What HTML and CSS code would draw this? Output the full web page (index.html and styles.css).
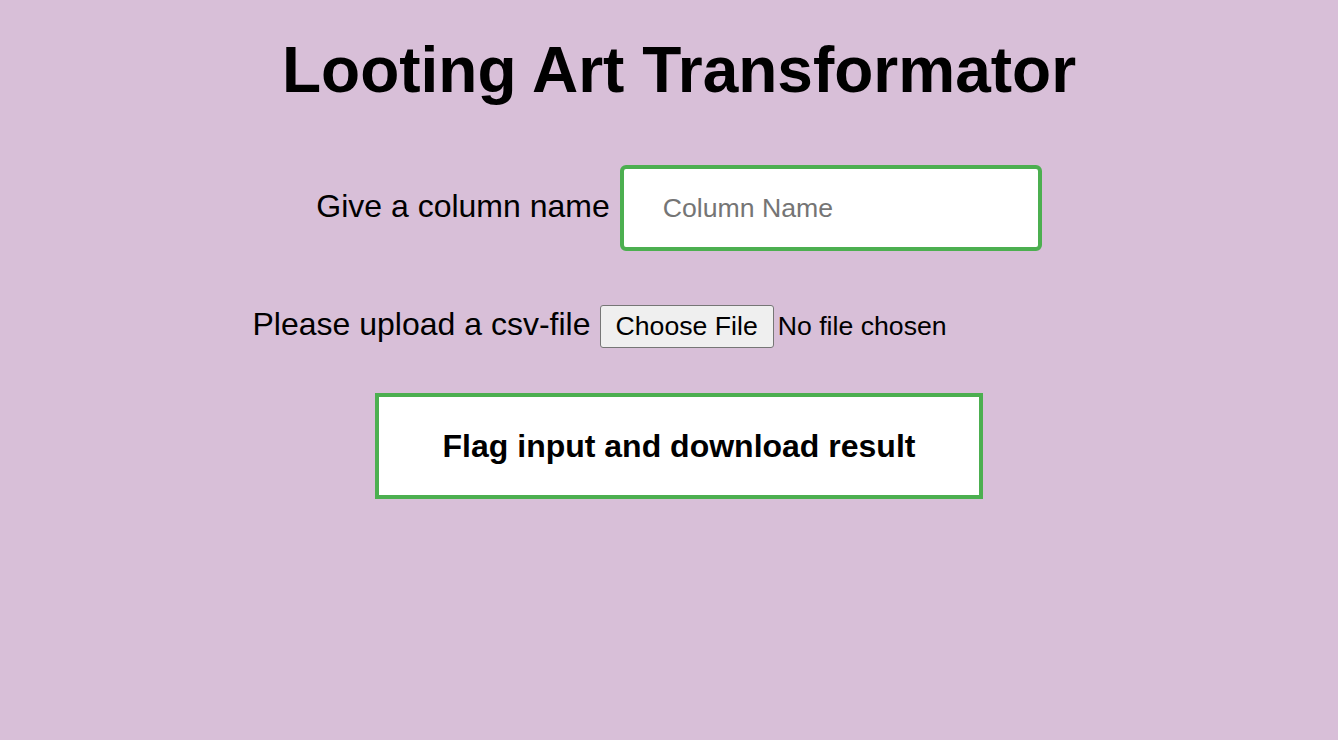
FILE: index.html
```html
<!DOCTYPE html>
<html lang="en">
<head>
<meta charset="utf-8">
<title>Looting Art Transformator</title>
<link rel="stylesheet" href="styles.css">
</head>
<body>
<main class="page">
  <h1 class="title">Looting Art Transformator</h1>
  <form class="form">
    <div class="row row-name">
      <label class="label" for="col">Give a column name</label>
      <input class="text-input" id="col" type="text" placeholder="Column Name">
    </div>
    <div class="row row-file">
      <label class="label" for="file">Please upload a csv-file</label>
      <input class="file-input" id="file" type="file" accept=".csv">
    </div>
    <button class="submit" type="button">Flag input and download result</button>
  </form>
</main>
</body>
</html>
```

FILE: styles.css
```css
html, body {
  margin: 0;
  padding: 0;
}
body {
  background: #d8bfd8;
  font-family: "Liberation Sans", Arial, sans-serif;
  color: #000;
  min-height: 740px;
}
.page {
  display: flex;
  flex-direction: column;
  align-items: center;
  padding: 33px 0 0 20px;
}
.title {
  margin: 0;
  font-size: 64px;
  line-height: 74px;
  font-weight: bold;
}
.form {
  display: flex;
  flex-direction: column;
  align-items: center;
  margin-top: 58px;
}
.row {
  display: flex;
  align-items: baseline;
}
.row-name {
  gap: 10px;
}
.row-file {
  gap: 10px;
  margin-top: 54px;
}
.label {
  font-size: 32px;
  line-height: 37px;
}
.text-input {
  box-sizing: border-box;
  width: 422px;
  height: 86px;
  padding: 0 39px;
  border: 4px solid #4caf50;
  border-radius: 6px;
  background: #fff;
  font-family: "Liberation Sans", Arial, sans-serif;
  font-size: 26.67px;
  color: #000;
  outline: none;
}
.text-input::placeholder {
  color: #757575;
}
.file-input {
  font-family: "Liberation Sans", Arial, sans-serif;
  font-size: 26.67px;
  color: #000;
}
.file-input::file-selector-button {
  font-family: "Liberation Sans", Arial, sans-serif;
  font-size: 26.67px;
  padding: 5px 15px 5px 14px;
  margin-right: 4px;
  border: 1px solid #767676;
  border-radius: 3px;
  background: #efefef;
  color: #000;
}
.submit {
  margin-top: 45px;
  padding: 30px 64px;
  border: 4px solid #4caf50;
  border-radius: 0;
  background: #fff;
  font-family: "Liberation Sans", Arial, sans-serif;
  font-size: 32px;
  line-height: 38px;
  font-weight: bold;
  color: #000;
}
```
